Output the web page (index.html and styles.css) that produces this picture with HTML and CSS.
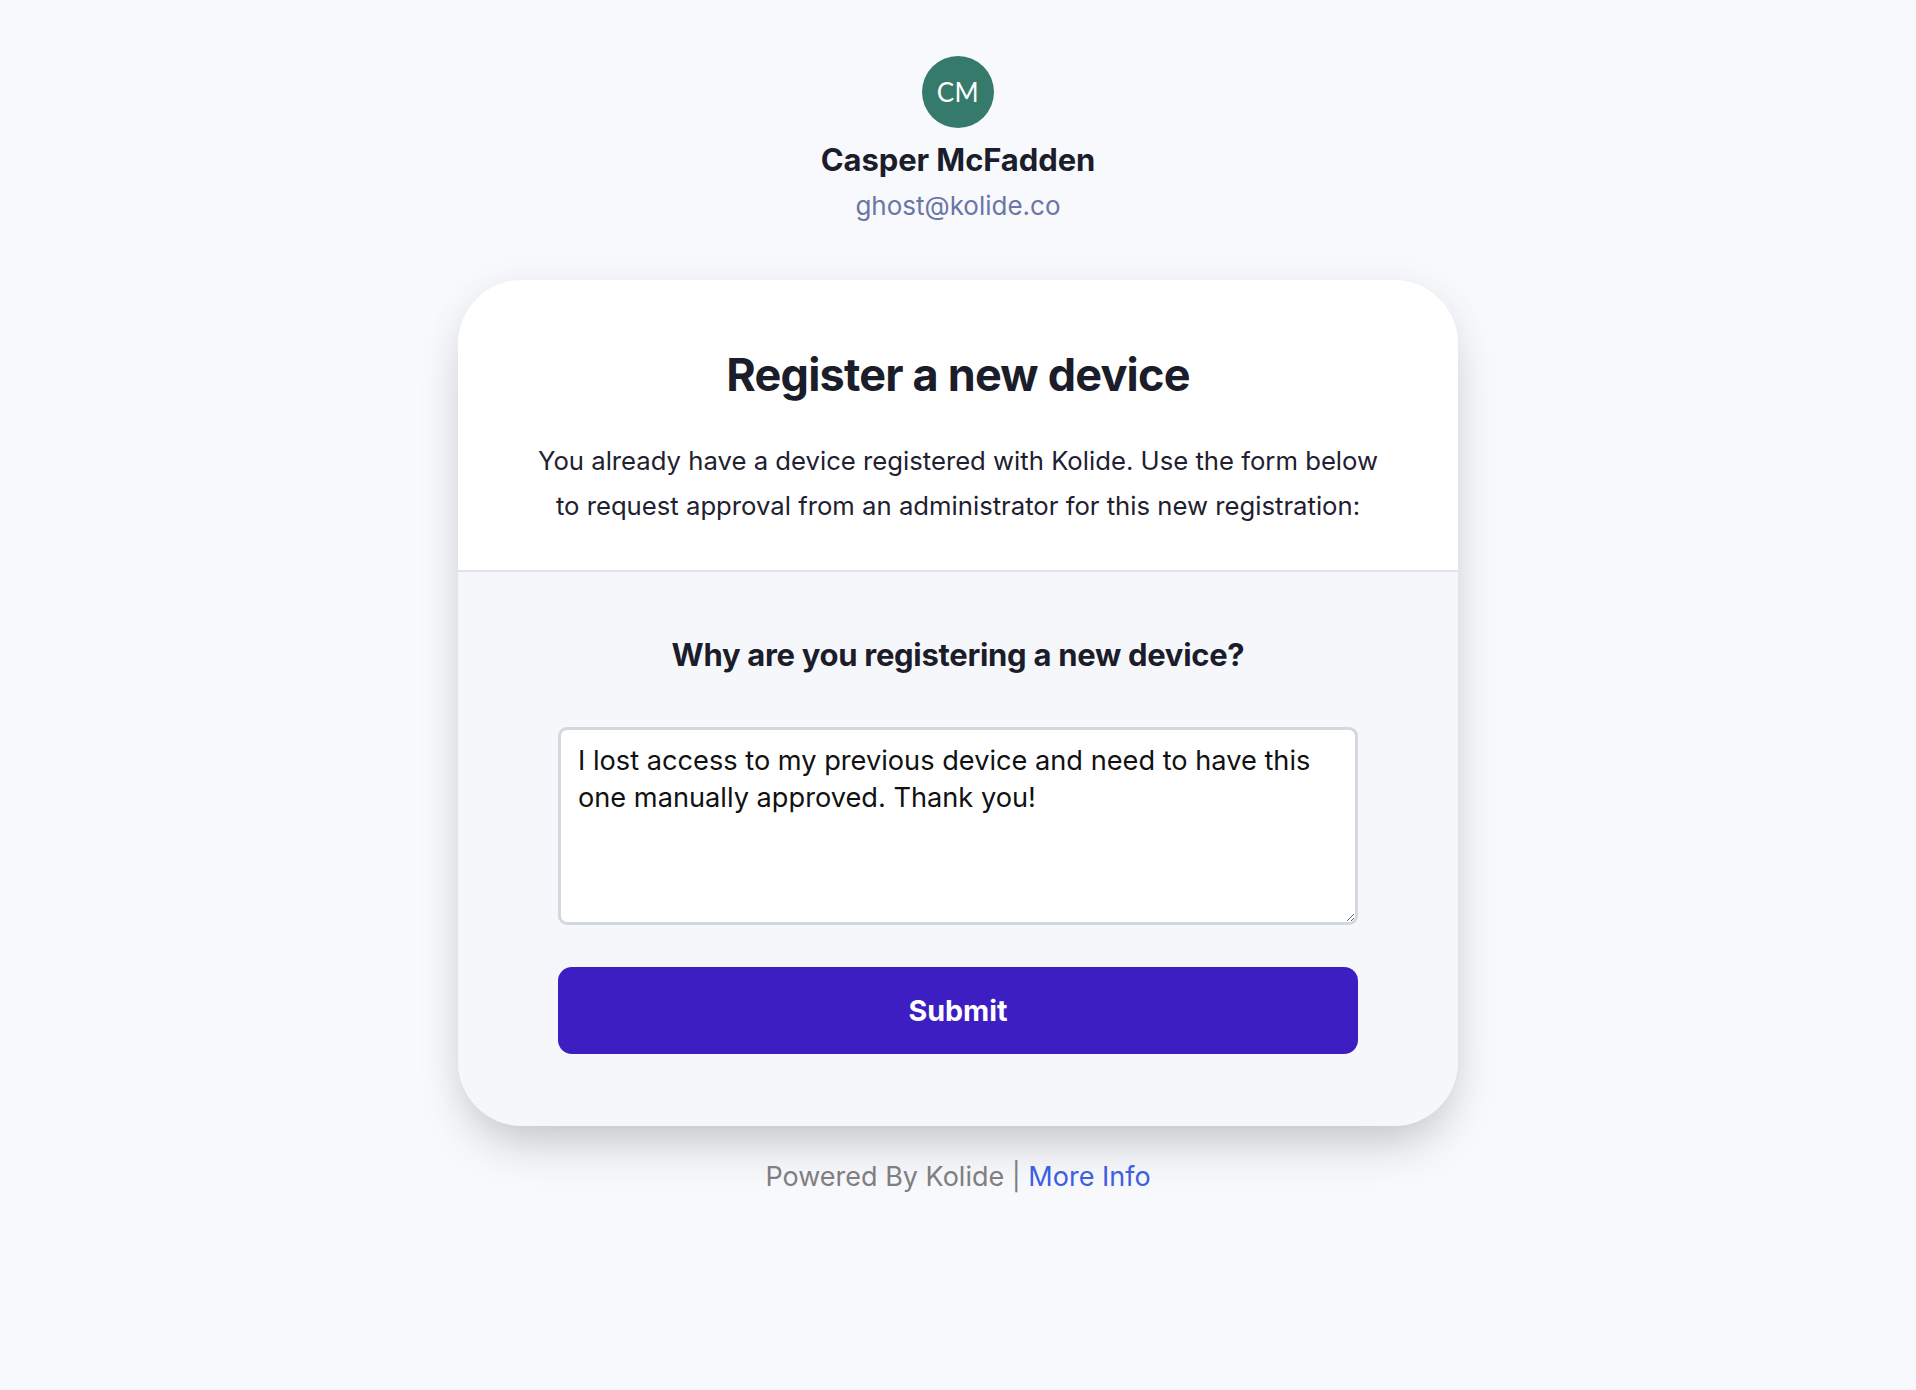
FILE: index.html
```html
<!DOCTYPE html>
<html lang="en">
<head>
<meta charset="utf-8">
<title>Register a new device</title>
<link rel="stylesheet" href="styles.css">
</head>
<body>
<main class="page">
  <header class="user">
    <div class="avatar">CM</div>
    <div class="user-name">Casper McFadden</div>
    <div class="user-email">ghost@kolide.co</div>
  </header>

  <section class="card">
    <div class="card-top">
      <h1 class="title">Register a new device</h1>
      <p class="lead">You already have a device registered with Kolide. Use the form below to request approval from an administrator for this new registration:</p>
    </div>
    <form class="card-bottom">
      <h2 class="question">Why are you registering a new device?</h2>
      <textarea class="reason">I lost access to my previous device and need to have this one manually approved. Thank you!</textarea>
      <button type="button" class="submit">Submit</button>
    </form>
  </section>

  <footer class="footer">Powered By Kolide | <a class="footer-link" href="#">More Info</a></footer>
</main>
</body>
</html>
```

FILE: styles.css
```css
* { box-sizing: border-box; }

html, body {
  margin: 0;
  padding: 0;
  background: #f8f9fd;
}

body {
  font-family: "Inter", "Liberation Sans", sans-serif;
  color: #1b1d2a;
}

.page {
  display: flex;
  flex-direction: column;
  align-items: center;
  padding-top: 56px;
  padding-bottom: 80px;
}

.user {
  display: flex;
  flex-direction: column;
  align-items: center;
}

.avatar {
  width: 72px;
  height: 72px;
  border-radius: 50%;
  background: #357a6a;
  color: #ffffff;
  font-family: "Lato", "Open Sans", sans-serif;
  font-size: 26px;
  display: flex;
  align-items: center;
  justify-content: center;
  letter-spacing: 0.5px;
}

.user-name {
  margin-top: 14px;
  font-size: 31px;
  line-height: 36px;
  font-weight: 700;
  letter-spacing: -0.1px;
  color: #1b1d2a;
}

.user-email {
  margin-top: 12px;
  font-size: 26px;
  line-height: 32px;
  color: #6b75a6;
}

.card {
  margin-top: 58px;
  width: 1000px;
  border-radius: 64px;
  overflow: hidden;
  background: #f6f7fa;
  box-shadow: 0 25px 50px -12px rgba(0, 0, 0, 0.22), 0 0 40px rgba(0, 0, 0, 0.04);
}

.card-top {
  background: #ffffff;
  padding: 68px 75px 42px;
  text-align: center;
  border-bottom: 2px solid #e2e3e8;
}

.title {
  margin: 0;
  font-size: 45px;
  line-height: 54px;
  font-weight: 700;
  letter-spacing: -0.8px;
  color: #1b1d2a;
}

.lead {
  margin: 36px 0 0;
  font-size: 25.7px;
  line-height: 45px;
  color: #1f2130;
}

.card-bottom {
  display: flex;
  flex-direction: column;
  align-items: center;
  padding: 63px 100px 72px;
  margin: 0;
}

.question {
  margin: 0;
  font-size: 31px;
  line-height: 40px;
  font-weight: 700;
  letter-spacing: -0.3px;
  color: #1b1d2a;
}

.reason {
  margin-top: 52px;
  width: 800px;
  height: 198px;
  border: 3px solid #d3d7de;
  border-radius: 9px;
  background: #ffffff;
  padding: 12px 17px;
  font-family: "Inter", "Liberation Sans", sans-serif;
  font-size: 27.2px;
  line-height: 37px;
  color: #111111;
  resize: vertical;
  outline: none;
}

.submit {
  margin-top: 42px;
  width: 800px;
  height: 87px;
  border: none;
  border-radius: 14px;
  background: #3c1ec3;
  color: #ffffff;
  font-family: "Inter", "Liberation Sans", sans-serif;
  font-size: 28.7px;
  font-weight: 700;
  cursor: pointer;
}

.footer {
  margin-top: 35px;
  font-size: 27px;
  line-height: 32px;
  color: #7f7f80;
}

.footer-link {
  color: #3d5ee1;
  text-decoration: none;
}
```
